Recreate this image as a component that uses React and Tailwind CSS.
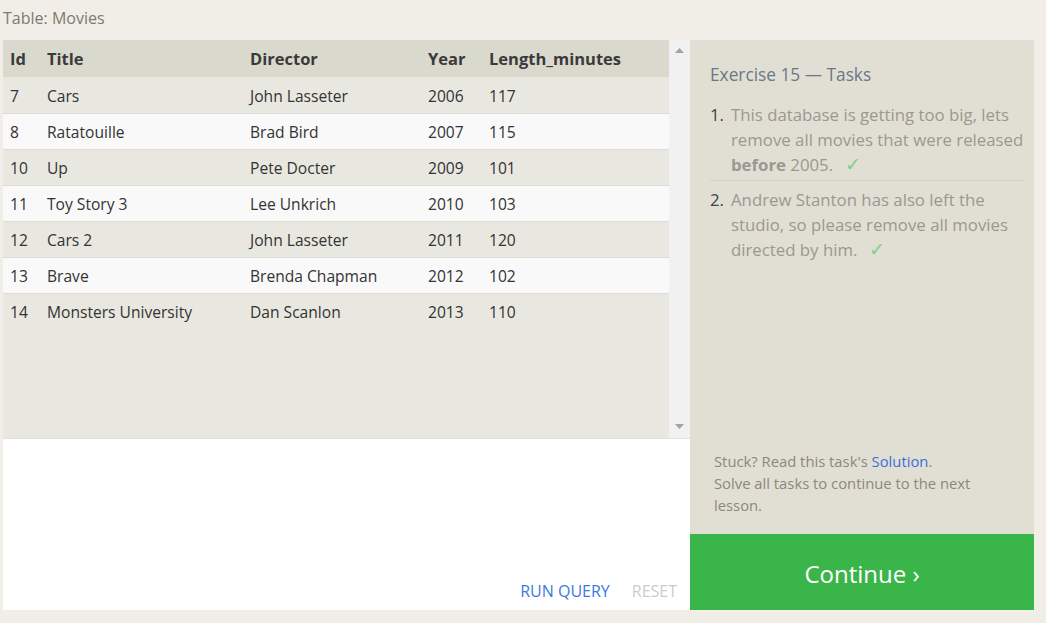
import React from "react";

const rows = [
  ["7", "Cars", "John Lasseter", "2006", "117"],
  ["8", "Ratatouille", "Brad Bird", "2007", "115"],
  ["10", "Up", "Pete Docter", "2009", "101"],
  ["11", "Toy Story 3", "Lee Unkrich", "2010", "103"],
  ["12", "Cars 2", "John Lasseter", "2011", "120"],
  ["13", "Brave", "Brenda Chapman", "2012", "102"],
  ["14", "Monsters University", "Dan Scanlon", "2013", "110"],
];

const font = { fontFamily: '"Open Sans", "Noto Sans", sans-serif' };

export default function App() {
  return (
    <div className="w-[1046px] h-[623px] bg-[#f0eee6] overflow-hidden" style={font}>
      <div className="h-[40px] pl-[3px] pt-[6px] text-[16px] text-[#7d7a72] leading-[24px]">Table: Movies</div>
      <div className="flex ml-[3px] h-[570px]">
        <div className="w-[687px] flex flex-col">
          <div className="h-[398px] flex bg-[#e9e8e0]">
            <div className="flex-1">
              <table className="w-full border-collapse text-[15.6px] text-[#333]">
                <thead>
                  <tr className="bg-[#dad9cd] h-[37px] text-[#3a3a3a] text-[16.5px]">
                    <th className="text-left font-bold pl-[7px] w-[44px] pt-[2px]">Id</th>
                    <th className="text-left font-bold w-[203px] pt-[2px]">Title</th>
                    <th className="text-left font-bold w-[178px] pt-[2px]">Director</th>
                    <th className="text-left font-bold w-[61px] pt-[2px]">Year</th>
                    <th className="text-left font-bold pt-[2px]">Length_minutes</th>
                  </tr>
                </thead>
                <tbody>
                  {rows.map((r, i) => (
                    <tr
                      key={r[0]}
                      className={
                        (i % 2 === 1 ? "bg-[#f9f9f9] " : "bg-[#e9e8e0] ") +
                        (i === rows.length - 1 ? "h-[36px]" : "h-[36px] border-b border-[#dedcd4]")
                      }
                    >
                      <td className="pl-[7px] pt-[3px]">{r[0]}</td>
                      <td className="pt-[3px]">{r[1]}</td>
                      <td className="pt-[3px]">{r[2]}</td>
                      <td className="pt-[3px]">{r[3]}</td>
                      <td className="pt-[3px]">{r[4]}</td>
                    </tr>
                  ))}
                </tbody>
              </table>
            </div>
            <div className="w-[21px] bg-[#f1f1f1] flex flex-col justify-between items-center py-[8px]">
              <svg width="9" height="6" viewBox="0 0 9 6"><path d="M4.5 0 L9 5 L0 5 Z" fill="#a3a3a3" /></svg>
              <svg width="9" height="6" viewBox="0 0 9 6"><path d="M0 0 L9 0 L4.5 5 Z" fill="#a3a3a3" /></svg>
            </div>
          </div>
          <div className="flex-1 bg-white border-t border-[#e3e2da] flex items-end justify-end pb-[7px] pr-[13px] gap-[22px] text-[16px]">
            <span className="text-[#3a7ae0]">RUN QUERY</span>
            <span className="text-[#cccccc]">RESET</span>
          </div>
        </div>
        <div className="w-[344px] bg-[#e1dfd4] flex flex-col">
          <div className="flex-1 pl-[20px] pr-[6px] pt-[23px]">
            <div className="text-[17.3px] text-[#6b7788] leading-[24px]">Exercise 15 — Tasks</div>
            <ol className="mt-[15px] text-[16.8px] leading-[25px] text-[#9a9891]">
              <li className="flex pb-[3px] border-b border-[#d3d1c6] mr-[3px]">
                <span className="w-[21px] text-[#3a4250]">1.</span>
                <span className="flex-1 mr-[-3px]">
                  This database is getting too big, lets remove all movies that were released <b className="font-bold">before</b> 2005.
                  <span className="text-[#7fcf8a] ml-[12px] text-[19px] leading-[20px]">✓</span>
                </span>
              </li>
              <li className="flex pt-[6px]">
                <span className="w-[21px] text-[#3a4250]">2.</span>
                <span className="flex-1">
                  Andrew Stanton has also left the studio, so please remove all movies directed by him.
                  <span className="text-[#7fcf8a] ml-[12px] text-[19px] leading-[20px]">✓</span>
                </span>
              </li>
            </ol>
          </div>
          <div className="pl-[24px] pr-[40px] pb-[18px] text-[14.8px] leading-[22px] text-[#8a8880]">
            <div>
              Stuck? Read this task's <span className="text-[#3a6fd8]">Solution</span>.
            </div>
            <div>Solve all tasks to continue to the next lesson.</div>
          </div>
          <div className="h-[76px] bg-[#3ab54a] flex items-center justify-center text-white text-[24px] pt-[3px]">
            Continue ›
          </div>
        </div>
      </div>
    </div>
  );
}
